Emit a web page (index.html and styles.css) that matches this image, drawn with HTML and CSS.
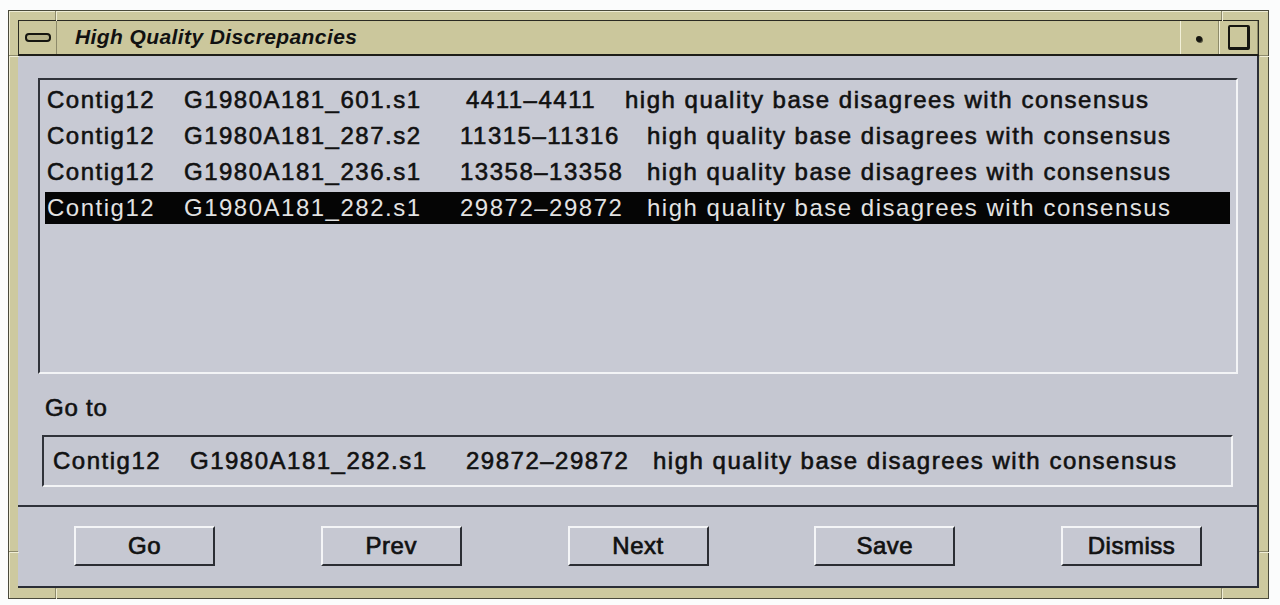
FILE: index.html
```html
<!DOCTYPE html>
<html>
<head>
    <title>High Quality Discrepancies</title>
    <link rel="stylesheet" href="styles.css">
</head>
<body>
    <div class="window">
        <!-- frame corner notches -->
        <span class="notch n-top-left"></span>
        <span class="notch n-left-top"></span>
        <span class="notch n-top-right"></span>
        <span class="notch n-right-top"></span>
        <span class="notch n-bottom-left"></span>
        <span class="notch n-left-bottom"></span>
        <span class="notch n-bottom-right"></span>
        <span class="notch n-right-bottom"></span>

        <div class="titlebar">
            <div class="tb-menu"><span class="pill"></span></div>
            <div class="tb-title">High Quality Discrepancies</div>
            <div class="tb-min"><span class="dot"></span></div>
            <div class="tb-max"><span class="square"></span></div>
        </div>
        <div class="client">
            <div class="panel">
                <div class="list">
                    <div class="row">
                        <span class="c-contig">Contig12</span>
                        <span class="c-read">G1980A181_601.s1</span>
                        <span class="c-range short">4411–4411</span>
                        <span class="c-desc">high quality base disagrees with consensus</span>
                    </div>
                    <div class="row">
                        <span class="c-contig">Contig12</span>
                        <span class="c-read">G1980A181_287.s2</span>
                        <span class="c-range">11315–11316</span>
                        <span class="c-desc">high quality base disagrees with consensus</span>
                    </div>
                    <div class="row">
                        <span class="c-contig">Contig12</span>
                        <span class="c-read">G1980A181_236.s1</span>
                        <span class="c-range">13358–13358</span>
                        <span class="c-desc">high quality base disagrees with consensus</span>
                    </div>
                    <div class="row selected">
                        <span class="c-contig">Contig12</span>
                        <span class="c-read">G1980A181_282.s1</span>
                        <span class="c-range">29872–29872</span>
                        <span class="c-desc">high quality base disagrees with consensus</span>
                    </div>
                </div>

                <div class="label">Go to</div>
                <div class="field">
                    <span class="c-contig">Contig12</span>
                    <span class="c-read">G1980A181_282.s1</span>
                    <span class="c-range">29872–29872</span>
                    <span class="c-desc">high quality base disagrees with consensus</span>
                </div>
            </div>

            <div class="actions">
                <button type="button">Go</button>
                <button type="button">Prev</button>
                <button type="button">Next</button>
                <button type="button">Save</button>
                <button type="button">Dismiss</button>
            </div>
        </div>
    </div>
</body>
</html>
```

FILE: styles.css
```css
body{
    margin: 0;
    background-color: #fbfcfc;
    font-family: "Liberation Sans", Arial, sans-serif;
    color: #111;
}

/* window frame */
.window{
    position: relative;
    box-sizing: border-box;
    width: 1261px;
    height: 589px;
    margin: 10px 0 0 8px;
    padding: 9px 9px 10px 9px;
    background-color: #cdc99f;
    border: 1px solid #4a4a3c;
    box-shadow: inset 1px 1px 0 #eeecd4;
    display: flex;
    flex-direction: column;
}

.notch{
    position: absolute;
    background-color: #8e8b6c;
    box-shadow: 1px 1px 0 #f0eed6;
}

.n-top-left{ left: 46px; top: 0; width: 1px; height: 9px; }
.n-top-right{ right: 46px; top: 0; width: 1px; height: 9px; }
.n-bottom-left{ left: 46px; bottom: 0; width: 1px; height: 10px; }
.n-bottom-right{ right: 46px; bottom: 0; width: 1px; height: 10px; }
.n-left-top{ left: 0; top: 44px; width: 9px; height: 1px; }
.n-right-top{ right: 0; top: 44px; width: 9px; height: 1px; }
.n-left-bottom{ left: 0; bottom: 46px; width: 9px; height: 1px; }
.n-right-bottom{ right: 0; bottom: 46px; width: 9px; height: 1px; }

.titlebar{
    display: flex;
    height: 36px;
    box-sizing: border-box;
    border: 1px solid #2a2a22;
    border-bottom: 2px solid #1e1e18;
    background-color: #cbc79c;
}

.tb-menu, .tb-min, .tb-max{
    width: 37px;
    display: flex;
    align-items: center;
    justify-content: center;
    border-left: 1px solid #f2f0d8;
    border-right: 1px solid #8d8a6a;
}

.tb-menu{
    border-left: none;
}

.pill{
    width: 22px;
    height: 5px;
    border: 2px solid #151510;
    border-radius: 4px;
    background-color: #b7b38a;
}

.dot{
    width: 6px;
    height: 6px;
    margin: 2px 0 0 -2px;
    border-radius: 3px;
    background-color: #151510;
    box-shadow: 1px 1px 0 #55533f;
}

.square{
    width: 17px;
    height: 20px;
    border: 2px solid #151510;
    border-right-width: 3px;
    border-bottom-width: 3px;
    border-radius: 2px;
}

.tb-title{
    flex: 1;
    padding-left: 18px;
    font-size: 21px;
    font-weight: bold;
    font-style: italic;
    line-height: 32px;
    letter-spacing: 0.4px;
}

/* client area */
.client{
    flex: 1;
    display: flex;
    flex-direction: column;
    background-color: #c5c7d1;
    border-right: 2px solid #2b2e36;
    border-bottom: 2px solid #2b2e36;
}

.panel{
    padding: 22px 19px 18px 20px;
    border-bottom: 2px solid #2f323a;
}

.list{
    height: 288px;
    padding: 4px 6px 0 5px;
    border-top: 2px solid #30333a;
    border-left: 2px solid #30333a;
    border-bottom: 2px solid #f3f4f6;
    border-right: 2px solid #f3f4f6;
    background-color: #c8cad4;
}

.row, .field{
    display: flex;
    align-items: center;
    font-size: 24px;
    letter-spacing: 1.5px;
    -webkit-text-stroke: 0.6px #111;
    white-space: pre;
}

.row{
    height: 32px;
    margin-bottom: 4px;
    padding-left: 2px;
}

.row.selected{
    background-color: #050505;
    color: #e2e2e2;
    -webkit-text-stroke: 0;
}

.c-contig{
    width: 137px;
}

.c-read{
    width: 276px;
}

.c-range{
    width: 187px;
}

.c-range.short{
    width: 159px;
    padding-left: 6px;
}

.label{
    margin-top: 20px;
    padding-left: 7px;
    font-size: 24px;
    line-height: 28px;
    letter-spacing: 0.8px;
    -webkit-text-stroke: 0.6px #111;
}

.field{
    height: 48px;
    margin: 13px 5px 0 4px;
    padding-left: 9px;
    border-top: 2px solid #30333a;
    border-left: 2px solid #30333a;
    border-bottom: 2px solid #f3f4f6;
    border-right: 2px solid #f3f4f6;
}

/* buttons */
.actions{
    flex: 1;
    display: flex;
    justify-content: space-between;
    align-items: flex-start;
    padding: 19px 55px 0 56px;
}

button{
    width: 141px;
    height: 40px;
    padding: 0;
    background-color: #c6c8d2;
    border-top: 2px solid #f4f5f7;
    border-left: 2px solid #f4f5f7;
    border-bottom: 2px solid #2b2d33;
    border-right: 2px solid #2b2d33;
    font-family: "Liberation Sans", Arial, sans-serif;
    font-size: 24px;
    letter-spacing: 0.5px;
    color: #111;
    -webkit-text-stroke: 0.7px #111;
}
```
